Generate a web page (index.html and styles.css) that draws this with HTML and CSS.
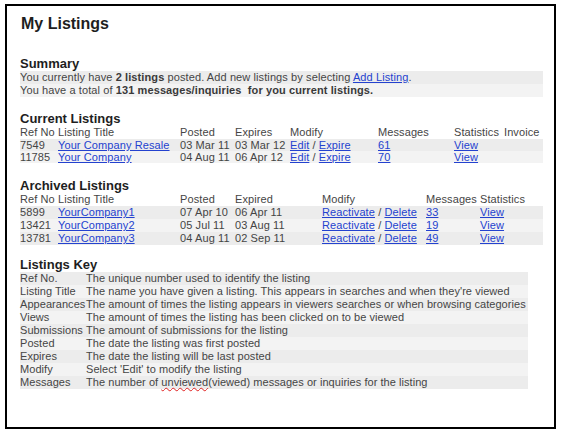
FILE: index.html
```html
<!DOCTYPE html>
<html>
<head>
<meta charset="utf-8">
<link rel="stylesheet" href="styles.css">
</head>
<body>
<div class="frame">
  <h1 class="title">My Listings</h1>

  <h2 class="section summary-h">Summary</h2>
  <table class="grid summary">
    <tr class="odd"><td>You currently have <b>2 listings</b> posted. Add new listings by selecting <a href="#">Add Listing</a>.</td></tr>
    <tr class="even"><td>You have a total of <b>131 messages/inquiries&nbsp; for you current listings.</b></td></tr>
  </table>

  <h2 class="section">Current Listings</h2>
  <table class="grid current">
    <colgroup><col class="c-ref"><col class="c-title"><col class="c-date"><col class="c-date"><col class="c-mod"><col class="c-msg"><col class="c-stat"><col class="c-inv"></colgroup>
    <tr class="head"><td>Ref No</td><td>Listing Title</td><td>Posted</td><td>Expires</td><td>Modify</td><td>Messages</td><td>Statistics</td><td>Invoice</td></tr>
    <tr class="odd short"><td>7549</td><td><a href="#">Your Company Resale</a></td><td>03 Mar 11</td><td>03 Mar 12</td><td><a href="#">Edit</a> / <a href="#">Expire</a></td><td><a href="#">61</a></td><td><a href="#">View</a></td><td></td></tr>
    <tr class="even short"><td>11785</td><td><a href="#">Your Company</a></td><td>04 Aug 11</td><td>06 Apr 12</td><td><a href="#">Edit</a> / <a href="#">Expire</a></td><td><a href="#">70</a></td><td><a href="#">View</a></td><td></td></tr>
  </table>

  <h2 class="section">Archived Listings</h2>
  <table class="grid archived">
    <colgroup><col class="c-ref"><col class="c-title"><col class="c-date"><col class="a-exp"><col class="a-mod"><col class="a-msg"><col class="a-stat"></colgroup>
    <tr class="head"><td>Ref No</td><td>Listing Title</td><td>Posted</td><td>Expired</td><td>Modify</td><td>Messages</td><td>Statistics</td></tr>
    <tr class="odd"><td>5899</td><td><a href="#">YourCompany1</a></td><td>07 Apr 10</td><td>06 Apr 11</td><td><a href="#">Reactivate</a> / <a href="#">Delete</a></td><td><a href="#">33</a></td><td><a href="#">View</a></td></tr>
    <tr class="even"><td>13421</td><td><a href="#">YourCompany2</a></td><td>05 Jul 11</td><td>03 Aug 11</td><td><a href="#">Reactivate</a> / <a href="#">Delete</a></td><td><a href="#">19</a></td><td><a href="#">View</a></td></tr>
    <tr class="odd"><td>13781</td><td><a href="#">YourCompany3</a></td><td>04 Aug 11</td><td>02 Sep 11</td><td><a href="#">Reactivate</a> / <a href="#">Delete</a></td><td><a href="#">49</a></td><td><a href="#">View</a></td></tr>
  </table>

  <h2 class="section">Listings Key</h2>
  <table class="grid key">
    <colgroup><col class="k-label"><col class="k-desc"></colgroup>
    <tr class="odd"><td>Ref No.</td><td>The unique number used to identify the listing</td></tr>
    <tr class="even"><td>Listing Title</td><td>The name you have given a listing. This appears in searches and when they're viewed</td></tr>
    <tr class="odd"><td>Appearances</td><td>The amount of times the listing appears in viewers searches or when browsing categories</td></tr>
    <tr class="even"><td>Views</td><td>The amount of times the listing has been clicked on to be viewed</td></tr>
    <tr class="odd"><td>Submissions</td><td>The amount of submissions for the listing</td></tr>
    <tr class="even"><td>Posted</td><td>The date the listing was first posted</td></tr>
    <tr class="odd"><td>Expires</td><td>The date the listing will be last posted</td></tr>
    <tr class="even"><td>Modify</td><td>Select 'Edit' to modify the listing</td></tr>
    <tr class="odd"><td>Messages</td><td>The number of <span class="spell">unviewed</span>(viewed) messages or inquiries for the listing</td></tr>
  </table>
</div>
</body>
</html>
```

FILE: styles.css
```css
html, body {
  margin: 0;
  padding: 0;
  background: #ffffff;
}
body {
  font-family: "Liberation Sans", Arial, sans-serif;
  font-size: 11px;
  color: #454545;
}
.frame {
  box-sizing: border-box;
  margin: 4px 0 0 5px;
  width: 551px;
  height: 425px;
  border: 2px solid #000000;
  padding: 8px 0 0 13px;
}
.title {
  margin: 0;
  font-size: 16px;
  line-height: 19px;
  font-weight: bold;
  color: #1e1e1e;
  padding-left: 1px;
}
.section {
  margin: 0;
  font-size: 13px;
  line-height: 15px;
  font-weight: bold;
  color: #1e1e1e;
}
.summary-h {
  margin-top: 23px;
}
.grid {
  border-collapse: collapse;
  border-spacing: 0;
  table-layout: fixed;
  margin-bottom: 16px;
  letter-spacing: 0.1px;
}
.grid td {
  padding: 0;
  height: 13px;
  line-height: 13px;
  white-space: nowrap;
  vertical-align: middle;
  overflow: visible;
}
.grid .short td {
  height: 12px;
  line-height: 12px;
}
.odd { background: #ececec; }
.even { background: #f3f3f3; }
.head { background: transparent; }
a { color: #2442cf; text-decoration: underline; }
b { color: #3a3a3a; }

.summary { width: 523px; margin-bottom: 14px; }
.current { width: 523px; margin-bottom: 15px; }
.archived { width: 523px; margin-bottom: 12px; }
.key { width: 508px; letter-spacing: 0.05px; }

.c-ref { width: 38px; }
.c-title { width: 122px; }
.c-date { width: 55px; }
.c-mod { width: 88px; }
.c-msg { width: 76px; }
.c-stat { width: 50px; }
.c-inv { width: 39px; }

.a-exp { width: 87px; }
.a-mod { width: 104px; }
.a-msg { width: 54px; }
.a-stat { width: 63px; }

.k-label { width: 66px; }
.k-desc { width: 442px; }

.spell {
  text-decoration-line: underline;
  text-decoration-style: wavy;
  text-decoration-color: #e02020;
  text-decoration-thickness: 1px;
  text-underline-offset: 1px;
}
```
